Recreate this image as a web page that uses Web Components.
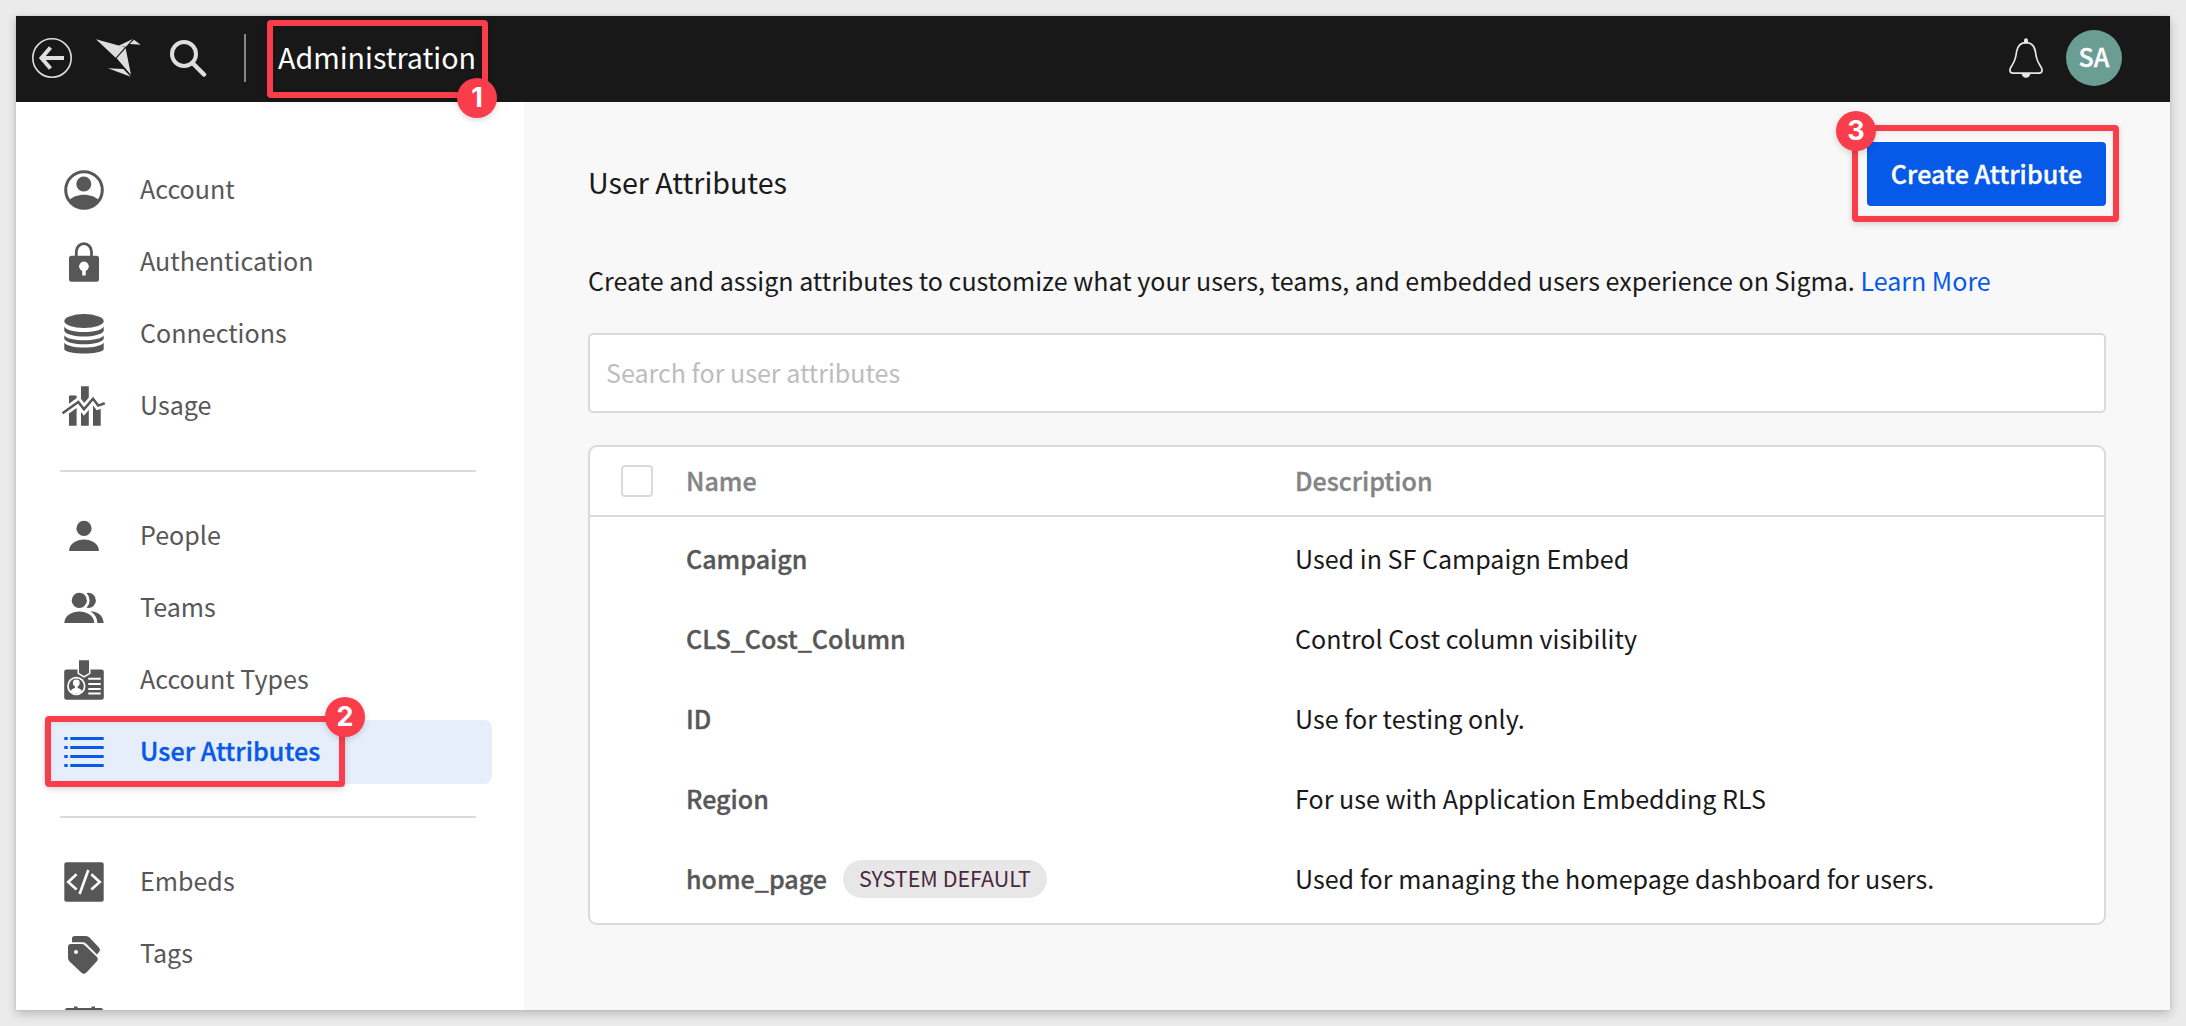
<!DOCTYPE html>
<html lang="en">
<head>
<meta charset="utf-8">
<title>Administration</title>
<style>
html,body{margin:0;height:100%;overflow:hidden}
body{background:#ebebeb;font-family:"Noto Sans CJK SC","Source Sans Pro","Open Sans",sans-serif;font-size:25.07px;line-height:36px;color:#1a1a1a}
</style>
</head>
<body>
<admin-app></admin-app>
<script>
const define = (name, css, html) => customElements.define(name, class extends HTMLElement {
  connectedCallback() {
    if (this.shadowRoot) return;
    const t = document.createElement('template');
    t.innerHTML = `<style>*{box-sizing:border-box}${css}</style>${typeof html === 'function' ? html(this) : html}`;
    this.attachShadow({ mode: 'open' }).append(t.content);
  }
});

const ICONS = {
  account: `<circle cx="20" cy="20" r="18.3" fill="none" stroke="currentColor" stroke-width="3"/><circle cx="19.8" cy="14" r="7.5"/><path d="M5 31C10 22.6 30 22.6 35 31A19 19 0 0 1 5 31Z"/>`,
  lock: `<path d="M12.3 15V10a7.5 8.3 0 0 1 15.2 0V15" fill="none" stroke="currentColor" stroke-width="2.8"/><path fill-rule="evenodd" d="M7.5 13.8H32.5Q35 13.8 35 16.3V37.2Q35 39.7 32.5 39.7H7.5Q5 39.7 5 37.2V16.3Q5 13.8 7.5 13.8ZM18.2 28.8V33.6H21.7V28.8A4.8 4.8 0 1 0 18.2 28.8Z"/>`,
  database: `<ellipse cx="20" cy="7.1" rx="19.7" ry="7"/><path d="M.3 12.5C4 19.9 36 19.9 39.7 12.5V17C36 24.3 4 24.3 .3 17ZM.3 21.5C4 27.8 36 27.8 39.7 21.5V25C36 32 4 32 .3 25ZM.3 28.5C4 35.3 36 35.3 39.7 28.5V35.5C36 40.8 4 40.8 .3 35.5Z"/>`,
  usage: `<path d="M5 9.4h7.6V39.7H5ZM17 .3h7.8V39.7H17ZM29 15h7.7V39.7H29Z"/><path d="M-2 27.5 14.3 15.9 20 23.3 29 12.8 34.2 19.6 41 17.3" fill="none" stroke="#fff" stroke-width="8"/><path d="M-1.5 27.3 14.3 15.9 20 23.3 29 12.8 34.2 19.6 40.8 17.3" fill="none" stroke="currentColor" stroke-width="2.5"/>`,
  person: `<circle cx="20" cy="12.4" r="7.6"/><path d="M5 35C5.500 19.500 34.500 19.500 35 35Z"/>`,
  people: `<circle cx="24.3" cy="12.4" r="7.6"/><path d="M20 23.7Q38 21 39.700 35H20Z"/><circle cx="15.300" cy="12.400" r="10.300" fill="#fff"/><path d="M.3 35C.8 19.500 29.800 19.500 30.300 35Z" stroke="#fff" stroke-width="6"/><circle cx="15.300" cy="12.400" r="7.600"/><path d="M.3 35C.8 19.500 29.800 19.500 30.300 35Z"/><path d="M-3 35H40v5H-3Z" fill="#fff"/>`,
  badge: `<rect x=".2" y="9.400" width="39.600" height="30.300" rx="2.300"/><path d="M15 0H25V12.900L20 15.900 15 12.900Z" stroke="#fff" stroke-width="3"/><path d="M15 .3H25V12.900L20 15.900 15 12.900Z"/><circle cx="12.300" cy="26" r="9.200" fill="#fff"/><circle cx="12.300" cy="26" r="7.500"/><circle cx="12.300" cy="23" r="3.400" fill="#fff"/><path d="M11 25.500H13.600V28C16 28.500 17.500 29.500 18 31.500 15.500 34 9.500 34.500 6.600 31.500 7.500 29.300 9 28.500 11 28Z" fill="#fff"/><path d="M24.300 17.800h12.400v2H24.300ZM24.300 23h12.400v2H24.300ZM24.300 28h12.400v2H24.300ZM24.300 32.500h12.400v2H24.300Z" fill="#fff"/>`,
  list: `<path d="M.3 5H3.700V8H.3ZM.3 14H3.700V17H.3ZM.3 23H3.700V26H.3ZM.3 32H3.700V35H.3ZM6.300 5H39.700V8H6.300ZM6.300 14H39.700V17H6.300ZM6.300 23H39.700V26H6.300ZM6.300 32H39.700V35H6.300Z"/>`,
  code: `<rect x=".3" y=".3" width="39.400" height="39.400" rx="2"/><path d="M12.600 12.300 4.200 20 12.600 27.500M27.300 12.300 35.800 20 27.300 27.500M24.300 8 15.600 32" fill="none" stroke="#fff" stroke-width="2.600"/>`,
  tags: `<path d="M8 8.200V4.500Q8 2 10.500 2H22Q24 2 25.500 3.500L35.200 13.800Q36.700 15.800 35.200 17.800L33 20.400 22 9.500Q20.600 8.200 18.500 8.200Z"/><path fill-rule="evenodd" d="M4 13Q4 10.100 7 10.100H17.500Q19.500 10.100 21 11.500L33 23Q34.600 24.800 33.300 26.800L22.200 38.700Q19.800 41 17.500 38.700L5.300 27.200Q4 25.800 4 23.800ZM12 16a2 2 0 1 0 .01 0Z"/>`,
  calendar: `<path d="M1 4Q1 2 3 2H37Q39 2 39 4V38H1ZM10 .4h3.500V3H10ZM27.500 .4H31V3H27.500Z"/>`
};

define('ui-icon', `:host{display:block;width:40px;height:40px;flex:none}svg{display:block;overflow:visible;width:40px;height:40px}`,
  el => `<svg viewBox="0 0 40 40" fill="currentColor">${ICONS[el.getAttribute('name')]}</svg>`);

define('nav-item', `
:host{display:flex;align-items:center;gap:36px;height:64px;padding-left:20px;color:#575757;border-radius:8px;flex:none}
:host([active]){background:#e6eefc;color:#0759e8;font-weight:500;-webkit-text-stroke:.35px currentColor;letter-spacing:.07px}
span{padding-bottom:5px;white-space:nowrap}`,
  el => `<ui-icon name="${el.getAttribute('icon')}"></ui-icon><span><slot></slot></span>`);

define('nav-group', `:host{display:flex;flex-direction:column;gap:8px;flex:none}`, `<slot></slot>`);
define('nav-divider', `:host{display:block;height:2px;margin:0 16px;background:#dadada;flex:none}`, ``);

define('side-nav', `
:host{display:flex;flex-direction:column;gap:32px;width:508px;flex:none;padding:56px 32px 0 28px;background:#fff;overflow:hidden}`, `
<nav-group><nav-item icon="account">Account</nav-item><nav-item icon="lock">Authentication</nav-item><nav-item icon="database">Connections</nav-item><nav-item icon="usage">Usage</nav-item></nav-group>
<nav-divider></nav-divider>
<nav-group><nav-item icon="person">People</nav-item><nav-item icon="people">Teams</nav-item><nav-item icon="badge">Account Types</nav-item><nav-item icon="list" active>User Attributes</nav-item></nav-group>
<nav-divider></nav-divider>
<nav-group><nav-item icon="code">Embeds</nav-item><nav-item icon="tags">Tags</nav-item><nav-item icon="calendar"></nav-item></nav-group>`);

define('top-bar', `
:host{display:flex;align-items:center;height:86px;flex:none;background:#181818;color:#fff;padding:2px 48px 4px 16px}
svg{display:block;flex:none}
.bird{margin-left:24px}.search{margin-left:29px}
i{width:2px;height:48px;background:#868686;margin-left:37px}
h1{margin:0 auto 0 32px;font-size:28.65px;line-height:40px;font-weight:400;padding-bottom:3px}
.avatar{width:56px;height:56px;border-radius:50%;background:#6a9d94;margin-left:23px;display:flex;align-items:center;justify-content:center;font-weight:500;-webkit-text-stroke:.35px #fff}
.avatar span{padding-bottom:4px}`, `
<svg width="40" height="40" viewBox="0 0 40 40" fill="none" stroke="#dedede"><circle cx="20" cy="20" r="19.200" stroke-width="1.600"/><path d="M32 20H9.500M18.500 9.500 9.500 20 18.500 30.500" stroke-width="4"/></svg>
<svg class="bird" width="45" height="40" viewBox="216 24 135 120" fill="#dedede"><path d="M216 28 303 52 275 83ZM284 47 326 27 306 50ZM330 29 350 44 317 42ZM305 55 321 135 278 85ZM252 115 298 117 320 140Z"/></svg>
<svg class="search" width="37" height="38" viewBox="0 0 37 38" fill="none" stroke="#dedede" stroke-width="4"><circle cx="14" cy="15" r="12"/><path d="M22.500 24 34 35.500" stroke-width="4.500" stroke-linecap="round"/></svg>
<i></i><h1>Administration</h1>
<svg width="34" height="40" viewBox="0 0 34 40"><path d="M17 4.700C11 4.700 8.500 9 7.600 13.500 6.900 19.500 6.200 22.500 3.500 26.500 1.600 29.300.9 30.300.9 32 .9 34 2 35.200 4 35.200H30C32 35.200 33.100 34 33.100 32 33.100 30.300 32.400 29.300 30.500 26.500 27.800 22.500 27.100 19.500 26.400 13.500 25.500 9 23 4.700 17 4.700Z" fill="none" stroke="#e6e6e6" stroke-width="1.700"/><path d="M15 5.500V2.200a2 2 0 0 1 4 0V5.500ZM12.700 35.500H21.300a4.300 4.300 0 0 1-8.600 0Z" fill="#e6e6e6"/></svg>
<div class="avatar"><span>SA</span></div>`);

define('primary-button', `
:host{display:flex;align-items:center;justify-content:center;width:239px;height:64px;border-radius:4px;background:#0759e8;color:#fff;font-weight:500;letter-spacing:.07px;-webkit-text-stroke:.35px #fff}
span{padding-bottom:2px;white-space:nowrap}`, `<span><slot></slot></span>`);

define('search-field', `
:host{display:flex;align-items:center;height:80px;margin-top:31px;border:2px solid #dadada;border-radius:5px;background:#fff;padding:0 16px 0;color:#bdbdbd}
span{padding-bottom:3px}`, `<span><slot></slot></span>`);

define('tag-pill', `
:host{display:flex;align-items:center;height:38px;padding:0 16px;border-radius:19px;background:#e7e7e7;color:#4b2840;font-size:21.5px;line-height:32px;font-weight:400;-webkit-text-stroke:0;letter-spacing:0}
span{padding-bottom:2px}`, `<span><slot></slot></span>`);

define('attribute-row', `
:host{display:flex;align-items:center;height:80px;padding-left:96px}
.n{display:flex;align-items:center;gap:16px;width:609px;font-weight:500;color:#575757}
.n>span{-webkit-text-stroke:.35px currentColor}
span{padding-bottom:5px;white-space:nowrap}tag-pill{margin-bottom:2px}`,
  el => `<div class="n"><span>${el.getAttribute('name')}</span>${el.hasAttribute('tag') ? `<tag-pill>${el.getAttribute('tag')}</tag-pill>` : ''}</div><span><slot></slot></span>`);

define('attribute-table', `
:host{display:flex;flex-direction:column;height:480px;margin-top:32px;border:2px solid #dadada;border-radius:9px;background:#fff}
header{display:flex;align-items:center;height:70px;border-bottom:2px solid #dadada;padding-left:31px;margin-bottom:3px;color:#848484;font-weight:500;flex:none}
b{width:32px;height:32px;border:2px solid #dadada;border-radius:4px;margin-right:33px}
header span{padding-bottom:3px;-webkit-text-stroke:.35px currentColor}header span:first-of-type{width:609px}`, `
<header><b></b><span>Name</span><span>Description</span></header>
<attribute-row name="Campaign">Used in SF Campaign Embed</attribute-row>
<attribute-row name="CLS_Cost_Column">Control Cost column visibility</attribute-row>
<attribute-row name="ID">Use for testing only.</attribute-row>
<attribute-row name="Region">For use with Application Embedding RLS</attribute-row>
<attribute-row name="home_page" tag="SYSTEM DEFAULT">Used for managing the homepage dashboard for users.</attribute-row>`);

define('attributes-page', `
:host{display:block;flex:1;min-width:0;background:#f8f8f8;padding:40px 64px 0}
.head{display:flex;justify-content:space-between;height:64px}
h2{margin:20px 0 0;font-size:28.65px;line-height:40px;font-weight:400}
p{margin:56px 0 0;height:40px;white-space:nowrap;font-size:25.06px}a{color:#0759e8}`, `
<div class="head"><h2>User Attributes</h2><primary-button>Create Attribute</primary-button></div>
<p>Create and assign attributes to customize what your users, teams, and embedded users experience on Sigma. <a>Learn More</a></p>
<search-field>Search for user attributes</search-field>
<attribute-table></attribute-table>`);

define('callout-mark', `
:host{position:absolute;display:block;box-sizing:border-box;border:6px solid #f93d4a;border-radius:4px;box-shadow:0 2px 6px rgba(0,0,0,.16),inset 0 1px 4px rgba(0,0,0,.08)}
div{position:absolute;left:var(--bx);top:var(--by);width:40px;height:40px;border-radius:50%;background:#f93d4a;color:#fff;font:700 27px/39px Inter,sans-serif;text-align:center;box-shadow:0 2px 6px rgba(0,0,0,.16)}`,
  `<div><slot></slot></div>`);

define('admin-app', `
:host{display:block;padding:16px;height:1026px}
.frame{position:relative;display:flex;flex-direction:column;width:2154px;height:994px;overflow:hidden}
.shadow{width:2154px;height:994px;box-shadow:0 4px 10px rgba(0,0,0,.2),0 0 3px rgba(0,0,0,.1)}
.body{display:flex;flex:1;min-height:0}
.m1{left:251px;top:4px;width:221px;height:78px;--bx:184px;--by:52px}
.m2{left:29.400px;top:700px;width:300px;height:71px;--bx:273.500px;--by:-25px}
.m3{left:1836px;top:109px;width:267px;height:97px;--bx:-22px;--by:-20px}`, `
<div class="shadow"><div class="frame">
<top-bar></top-bar>
<div class="body"><side-nav></side-nav><attributes-page></attributes-page></div>
<callout-mark class="m1">1</callout-mark><callout-mark class="m2">2</callout-mark><callout-mark class="m3">3</callout-mark>
</div></div>`);
</script>
</body>
</html>
